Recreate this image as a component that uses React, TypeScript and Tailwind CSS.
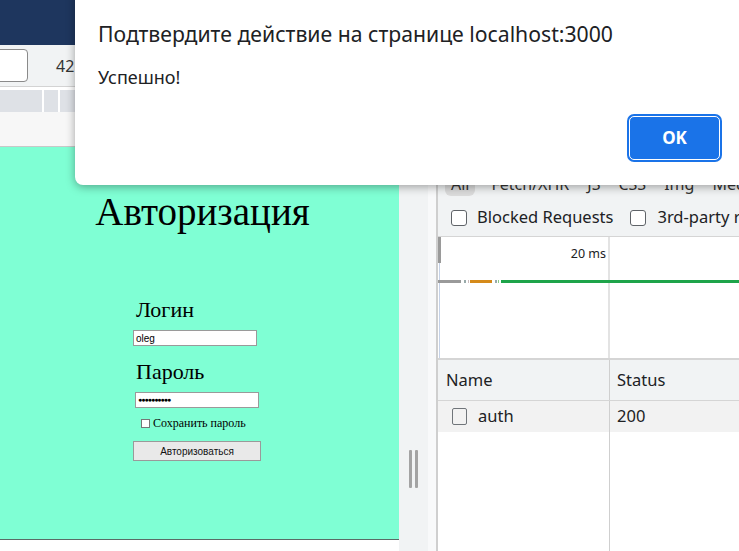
export default function App() {
  return (
    <div className="relative w-[739px] h-[551px] overflow-hidden bg-white flex flex-col font-['Noto_Sans',sans-serif]">
      {/* browser chrome */}
      <div className="h-[45px] bg-[#1e365e] shrink-0" />
      <div className="h-[41px] bg-[#f1f3f4] flex items-center shrink-0">
        <div className="ml-[-12px] w-[40px] h-[33px] bg-white border border-[#8a8a8a] rounded-[4px]" />
        <span className="ml-[28px] text-[16px] text-[#333]">42</span>
      </div>
      <div className="h-[1px] bg-[#d3d3d3] shrink-0" />
      <div className="h-[3px] bg-white shrink-0" />
      <div className="h-[22px] bg-[#dee1e6] flex shrink-0">
        <div className="w-[42px]" />
        <div className="w-[2px] bg-white" />
        <div className="w-[14px]" />
        <div className="w-[2px] bg-white" />
      </div>
      <div className="h-[34px] bg-[#f7f7f7] shrink-0" />
      <div className="h-[1px] bg-[#c8c8c8] shrink-0" />

      {/* main area */}
      <div className="flex flex-1 min-h-0">
        {/* page */}
        <div className="w-[399px] flex flex-col shrink-0">
          <div className="h-[393px] bg-[#7fffd4] border-b border-[#5a6b66] flex flex-col pt-[43px] font-['Liberation_Serif',serif] text-black">
            <h1 className="self-center ml-[6px] text-[39px] leading-[44px]">Авторизация</h1>
            <div className="w-[128px] mt-[63px] ml-[133px] flex flex-col">
              <label className="text-[22px] leading-[26px] ml-[3px]">Логин</label>
              <div className="mt-[7px] w-[124px] h-[16px] bg-white border border-[#9a9a9a] flex items-center px-[2px] font-['Liberation_Sans',sans-serif] text-[10px]">
                oleg
              </div>
              <label className="mt-[13px] text-[22px] leading-[26px] ml-[3px]">Пароль</label>
              <div className="mt-[7px] ml-[2px] w-[124px] h-[16px] bg-white border border-[#9a9a9a] flex items-center px-[2px] font-['Liberation_Sans',sans-serif] text-[7px] tracking-[-1px]">
                ●●●●●●●●●●
              </div>
              <div className="mt-[8px] ml-[8px] flex items-center gap-[3px]">
                <div className="w-[9px] h-[9px] bg-white border border-[#777]" />
                <span className="text-[12px] leading-[14px]">Сохранить пароль</span>
              </div>
              <div className="mt-[11px] w-[128px] h-[20px] bg-[#e9e9e9] border border-[#9a9a9a] flex items-center justify-center font-['Liberation_Sans',sans-serif] text-[10px] text-[#111]">
                Авторизоваться
              </div>
            </div>
          </div>
          <div className="flex-1 bg-white" />
        </div>

        {/* splitter */}
        <div className="w-[39px] bg-[#f1f3f4] flex shrink-0">
          <div className="w-[29px] flex items-start justify-center pt-[303px] gap-[3px]">
            <div className="w-[3px] h-[38px] bg-[#a3a3a3] rounded-[1px]" />
            <div className="w-[3px] h-[38px] bg-[#a3a3a3] rounded-[1px]" />
          </div>
          <div className="flex-1 bg-[#f8f9fa] border-r-2 border-[#cfcfcf]" />
        </div>

        {/* devtools */}
        <div className="flex-1 flex flex-col bg-white text-[#202124] min-w-0 overflow-hidden">
          <div className="h-[22px] bg-[#f1f3f4]" />
          <div className="h-[30px] bg-[#f1f3f4] flex items-center gap-[18px] px-[7px] text-[16px] text-[#333] whitespace-nowrap">
            <span className="bg-[#dcdcdc] rounded-[6px] px-[6px]">All</span>
            <div className="w-[1px] h-[18px] bg-[#c0c0c0] -ml-[8px]" />
            <span className="-ml-[12px]">Fetch/XHR</span>
            <span>JS</span>
            <span>CSS</span>
            <span>Img</span>
            <span>Media</span>
          </div>
          <div className="h-[38px] bg-[#f1f3f4] border-b border-[#d5d5d5] flex items-center px-[13px] text-[16.5px] whitespace-nowrap">
            <div className="shrink-0 w-[16px] h-[16px] border-[1.5px] border-[#5f6368] rounded-[3px] bg-white" />
            <span className="ml-[10px]">Blocked Requests</span>
            <div className="shrink-0 ml-[17px] w-[16px] h-[16px] border-[1.5px] border-[#5f6368] rounded-[3px] bg-white" />
            <span className="ml-[11px]">3rd-party requests</span>
          </div>
          {/* overview */}
          <div className="relative h-[123px] border-b-2 border-[#d5d5d5] flex">
            <div className="w-[172px] border-r-2 border-[#e3e3e3] flex justify-end pt-[8px] pr-[2px] text-[12.5px] leading-[18px]">
              20 ms
            </div>
            <div className="absolute left-0 top-0 w-[3px] h-[26px] bg-[#9a9a9a]" />
            <div className="absolute left-[1px] top-[26px] w-[1px] h-[95px] bg-[#c5d2e8]" />
            <div className="absolute left-0 right-0 top-[43px] h-[3px] flex items-center">
              <div className="w-[23px] h-[3px] bg-[#9a9a9a]" />
              <div className="ml-[3px] w-[2px] h-[3px] bg-[#9aa]" />
              <div className="ml-[2px] w-[1px] h-[3px] bg-[#cbb]" />
              <div className="ml-[1px] w-[22px] h-[3px] bg-[#d58a1a]" />
              <div className="ml-[3px] w-[2px] h-[3px] bg-[#9aa]" />
              <div className="ml-[1px] w-[1px] h-[3px] bg-[#8c8]" />
              <div className="ml-[2px] flex-1 h-[3px] bg-[#1ea44a]" />
            </div>
          </div>
          {/* table */}
          <div className="flex h-[41px] bg-[#f1f3f4] border-b border-[#d5d5d5] text-[16.5px]">
            <div className="w-[172px] border-r border-[#cfcfcf] flex items-center pl-[8px]">Name</div>
            <div className="flex-1 flex items-center pl-[7px]">Status</div>
          </div>
          <div className="flex h-[31px] bg-[#f2f2f2] text-[16.5px]">
            <div className="w-[172px] border-r border-[#cfcfcf] flex items-center pl-[14px]">
              <div className="w-[15px] h-[17px] border-[1.5px] border-[#70757a] rounded-[2px]" />
              <span className="ml-[11px]">auth</span>
            </div>
            <div className="flex-1 flex items-center pl-[7px]">200</div>
          </div>
          <div className="flex flex-1">
            <div className="w-[172px] border-r border-[#cfcfcf]" />
            <div className="flex-1" />
          </div>
        </div>
      </div>

      {/* confirm dialog */}
      <div className="absolute left-[75px] top-[-12px] w-[700px] h-[197px] bg-white rounded-[8px] shadow-[0_2px_10px_rgba(0,0,0,0.35)]">
        <div className="pl-[23px] pt-[32px] text-[21.2px] leading-[28px] text-[#202124]">
          Подтвердите действие на странице localhost:3000
        </div>
        <div className="pl-[23px] mt-[17px] text-[18px] leading-[24px] text-[#202124]">Успешно!</div>
        <div className="absolute left-[552px] top-[126px] w-[95px] h-[48px] rounded-[7px] bg-[#1a73e8] p-[2px]">
          <div className="w-full h-full rounded-[5px] border-[1.5px] border-white flex items-center justify-center text-white text-[17px] font-bold">
            OK
          </div>
        </div>
      </div>
    </div>
  );
}
